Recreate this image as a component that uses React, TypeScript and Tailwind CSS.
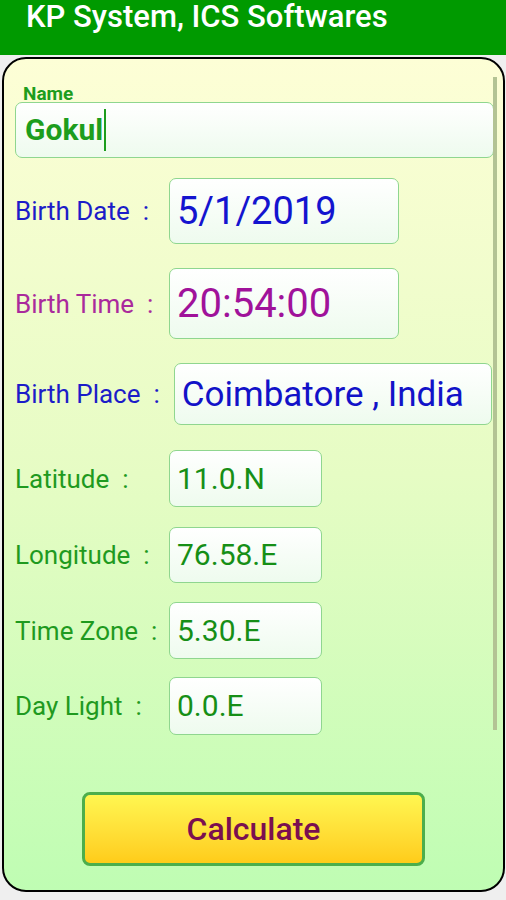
import React from 'react';

interface RowProps {
  label: string;
  value: string;
  rowClass: string;
  labelClass: string;
  boxClass: string;
  valueClass: string;
}

function Row({ label, value, rowClass, labelClass, boxClass, valueClass }: RowProps) {
  return (
    <div className={`flex items-center pl-[11px] ${rowClass}`}>
      <div className={`min-w-[145px] mr-[9px] whitespace-pre text-[26px] leading-none ${labelClass}`}>{label}</div>
      <div
        className={`flex items-center pl-[7px] rounded-[7px] border border-[#8fd68f] bg-gradient-to-b from-white to-[#eefbee] ${boxClass}`}
      >
        <span className={`leading-none ${valueClass}`}>{value}</span>
      </div>
    </div>
  );
}

export default function App() {
  return (
    <div className="w-[506px] h-[900px] overflow-hidden bg-[#efefef] font-['Roboto',sans-serif]">
      <div className="h-[55px] bg-[#009a00] pl-[26px]">
        <div className="text-[31px] leading-[34px] font-medium text-white">KP System, ICS Softwares</div>
      </div>

      <div className="relative mt-[2px] ml-[2px] mr-[1px] h-[835px] rounded-[24px] border-2 border-black bg-gradient-to-b from-[#fdfed6] via-[#e6fcc4] to-[#bffdb3] overflow-hidden">
        {/* scrollbar */}
        <div className="absolute left-[489px] top-[18px] w-[4px] h-[653px] bg-[#b3c394]" />

        <div className="pt-[25px] pl-[19px] mb-[-1px] text-[19px] leading-[19px] font-bold text-[#1d9d1d]">Name</div>
        <div className="ml-[11px] mr-[9px] h-[56px] flex items-center pl-[9px] rounded-[7px] border border-[#8fd68f] bg-gradient-to-b from-white to-[#eefbee]">
          <span className="text-[30px] leading-none font-bold text-[#1d9d1d]">Gokul</span>
          <span className="ml-[1px] w-[2px] h-[42px] bg-[#1d9d1d]" />
        </div>

        <Row
          label="Birth Date  :"
          value="5/1/2019"
          rowClass="mt-[20px]"
          labelClass="text-[#1c1cc8]"
          boxClass="w-[230px] h-[66px]"
          valueClass="text-[38px] text-[#1414cf]"
        />
        <Row
          label="Birth Time  :"
          value="20:54:00"
          rowClass="mt-[24px]"
          labelClass="text-[#aa2a9c]"
          boxClass="w-[230px] h-[71px]"
          valueClass="text-[40px] text-[#a0129a]"
        />
        <Row
          label="Birth Place  :"
          value="Coimbatore , India"
          rowClass="mt-[24px]"
          labelClass="pr-[5px] text-[#1c1cc8]"
          boxClass="w-[318px] h-[62px]"
          valueClass="text-[35px] text-[#1212c8]"
        />
        <Row
          label="Latitude  :"
          value="11.0.N"
          rowClass="mt-[25px]"
          labelClass="text-[#1f9a1f]"
          boxClass="w-[153px] h-[57px]"
          valueClass="text-[30px] text-[#168f16]"
        />
        <Row
          label="Longitude  :"
          value="76.58.E"
          rowClass="mt-[20px]"
          labelClass="text-[#1f9a1f]"
          boxClass="w-[153px] h-[56px]"
          valueClass="text-[30px] text-[#168f16]"
        />
        <Row
          label="Time Zone  :"
          value="5.30.E"
          rowClass="mt-[19px]"
          labelClass="text-[#1f9a1f]"
          boxClass="w-[153px] h-[57px]"
          valueClass="text-[30px] text-[#168f16]"
        />
        <Row
          label="Day Light  :"
          value="0.0.E"
          rowClass="mt-[18px]"
          labelClass="text-[#1f9a1f]"
          boxClass="w-[153px] h-[58px]"
          valueClass="text-[30px] text-[#168f16]"
        />

        <div className="mt-[57px] flex justify-center">
          <button className="w-[343px] h-[74px] rounded-[8px] border-[3px] border-[#4cae4c] bg-gradient-to-b from-[#fff650] to-[#ffcc18] text-[32px] font-medium text-[#7a0f50]">
            Calculate
          </button>
        </div>
      </div>
    </div>
  );
}
